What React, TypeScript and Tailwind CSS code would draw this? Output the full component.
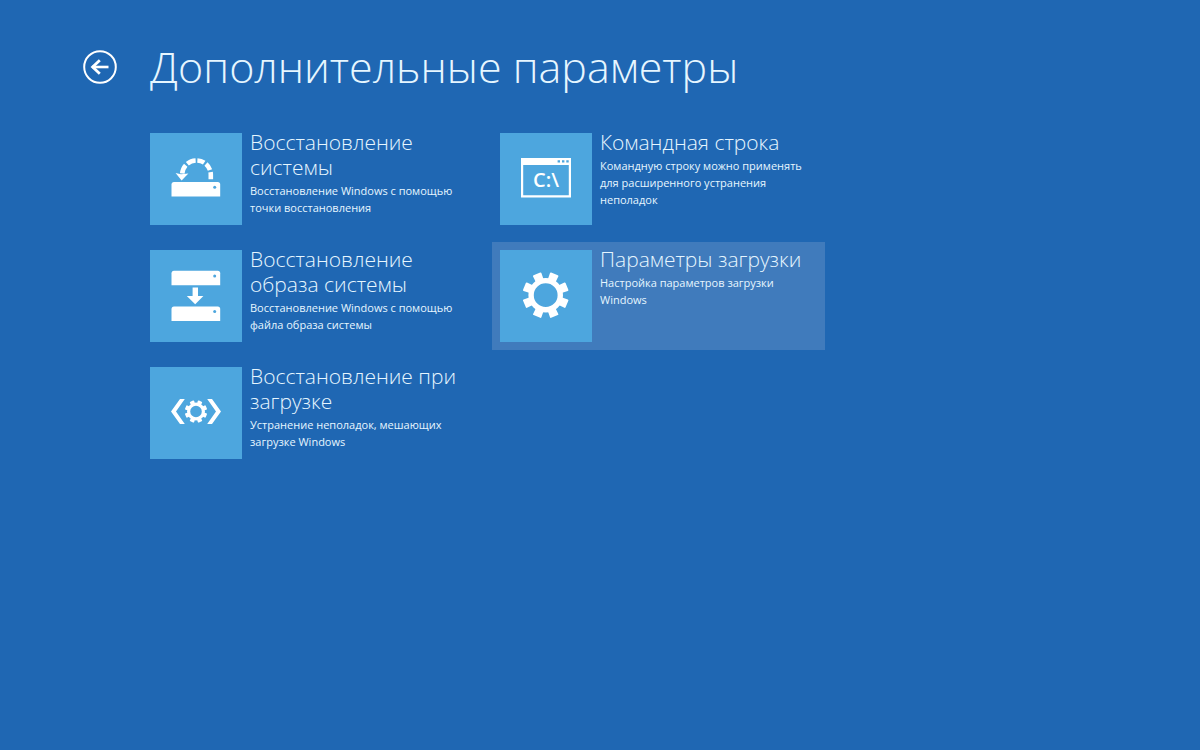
import type { ReactNode } from 'react';

const GEAR_ANGLES = [22.5, 67.5, 112.5, 157.5, 202.5, 247.5, 292.5, 337.5];

type GearProps = {
  cx: number;
  cy: number;
  ring: number;
  ringWidth: number;
  tip: number;
  toothWidth: number;
};

function Gear({ cx, cy, ring, ringWidth, tip, toothWidth }: GearProps) {
  const half = toothWidth / 2;
  return (
    <g transform={`translate(${cx} ${cy})`}>
      <circle r={ring} fill="none" stroke="#fff" strokeWidth={ringWidth} />
      {GEAR_ANGLES.map((angle) => (
        <path
          key={angle}
          d={`M${-half * 0.9} ${-ring}L${-half} ${-tip + 0.9}Q${-half} ${-tip} ${-half + 0.9} ${-tip}H${half - 0.9}Q${half} ${-tip} ${half} ${-tip + 0.9}L${half * 0.9} ${-ring}Z`}
          fill="#fff"
          transform={`rotate(${angle})`}
        />
      ))}
    </g>
  );
}

function Drive({ y }: { y: number }) {
  return (
    <g>
      <path d={`M21.5 ${y + 14.5}V${y + 2.5}Q21.5 ${y} 24 ${y}H67.7Q70.2 ${y} 70.2 ${y + 2.5}V${y + 14.5}Z`} fill="#fff" />
      <circle cx="64.7" cy={y + 5.2} r="1.5" fill="#4da6de" />
    </g>
  );
}

function RestoreIcon() {
  return (
    <>
      <Drive y={49} />
      <g fill="none" stroke="#fff" strokeWidth="4.6">
        <path d="M46.5 27.4A14.3 14.3 0 0 1 60.8 41.7V47.6" strokeDasharray="7.2 2.2" strokeDashoffset="-0.9" />
        <path d="M46.5 27.4A14.3 14.3 0 0 0 32.2 41.7" strokeDasharray="9 2.2" strokeDashoffset="-0.9" />
      </g>
      <path d="M25.6 40L31 41.2L38.4 40.6L31.6 47.6Z" fill="#fff" />
    </>
  );
}

function ImageIcon() {
  return (
    <>
      <Drive y={20.7} />
      <path d="M42.6 37.4H48V46H53.4L45.2 54.2L36.8 46H42.6Z" fill="#fff" />
      <Drive y={56.4} />
    </>
  );
}

function StartupIcon() {
  return (
    <>
      <path d="M21 44.5L30 32H34.8L26 44.5L34.8 57H30Z" fill="#fff" />
      <path d="M71 44.5L62 32H57.2L66 44.5L57.2 57H62Z" fill="#fff" />
      <Gear cx={46} cy={44.5} ring={7.4} ringWidth={3.2} tip={11.2} toothWidth={4.6} />
    </>
  );
}

function PromptIcon() {
  return (
    <>
      <path d="M21 25H71V64.4H21ZM23.2 32V62.2H68.8V32Z" fill="#fff" fillRule="evenodd" />
      <path d="M57.6 27.2h2.4v2.2h-2.4zM62 27.2h2.4v2.2H62zM66.3 27.2h2.4v2.2h-2.4z" fill="#4da6de" />
      <text x="46" y="54" textAnchor="middle" fontSize="20" fontWeight="600" fill="#fff" className="font-['Open_Sans',sans-serif]">
        C:\
      </text>
    </>
  );
}

function SettingsIcon() {
  return <Gear cx={45.7} cy={45.2} ring={14.6} ringWidth={5.4} tip={23} toothWidth={9} />;
}

type Option = {
  title: string;
  description: string;
  icon: ReactNode;
  active?: boolean;
};

const OPTIONS: Option[] = [
  {
    title: 'Восстановление системы',
    description: 'Восстановление Windows с помощью точки восстановления',
    icon: <RestoreIcon />,
  },
  {
    title: 'Восстановление образа системы',
    description: 'Восстановление Windows с помощью файла образа системы',
    icon: <ImageIcon />,
  },
  {
    title: 'Восстановление при загрузке',
    description: 'Устранение неполадок, мешающих загрузке Windows',
    icon: <StartupIcon />,
  },
  {
    title: 'Командная строка',
    description: 'Командную строку можно применять для расширенного устранения неполадок',
    icon: <PromptIcon />,
  },
  {
    title: 'Параметры загрузки',
    description: 'Настройка параметров загрузки Windows',
    icon: <SettingsIcon />,
    active: true,
  },
];

function OptionButton({ title, description, icon, active }: Option) {
  return (
    <button
      type="button"
      className={`flex w-full items-start gap-2 p-2 text-left hover:bg-[#407bbc] ${active ? 'bg-[#407bbc]' : ''}`}
    >
      <span className="size-[92px] shrink-0 bg-[#4da6de]">
        <svg viewBox="0 0 92 92" className="size-full" aria-hidden="true">
          {icon}
        </svg>
      </span>
      <span className="-mt-[3px] min-w-0 flex-1">
        <span className="block text-[21px] leading-[25px] font-light">{title}</span>
        <span className="mt-0.5 block text-[11px] leading-[17px]">{description}</span>
      </span>
    </button>
  );
}

export default function App() {
  return (
    <main className="min-h-screen bg-[#1f67b3] pt-10 pr-8 pb-10 font-['Open_Sans','Noto_Sans',sans-serif] text-[#e6f6ff]">
      <header className="flex items-center gap-[33px] pl-[83px]">
        <button type="button" aria-label="Назад" className="shrink-0">
          <svg viewBox="0 0 34 34" className="size-[34px]" fill="none" stroke="#fff" aria-hidden="true">
            <circle cx="17" cy="17" r="15.8" strokeWidth="2" />
            <path d="M9 17H25.5" strokeWidth="2.6" />
            <path d="M16.8 10.2L9.6 17L16.8 23.8" strokeWidth="2.8" />
          </svg>
        </button>
        <h1 className="text-[43px] leading-[54px] font-light">Дополнительные параметры</h1>
      </header>

      {/* options fill the first column top to bottom, then the second */}
      <div className="mt-[31px] ml-[142px] grid max-w-[683px] grid-cols-1 gap-x-[17px] gap-y-[9px] md:grid-flow-col md:grid-cols-2 md:grid-rows-3">
        {OPTIONS.map((option) => (
          <OptionButton key={option.title} {...option} />
        ))}
      </div>
    </main>
  );
}
